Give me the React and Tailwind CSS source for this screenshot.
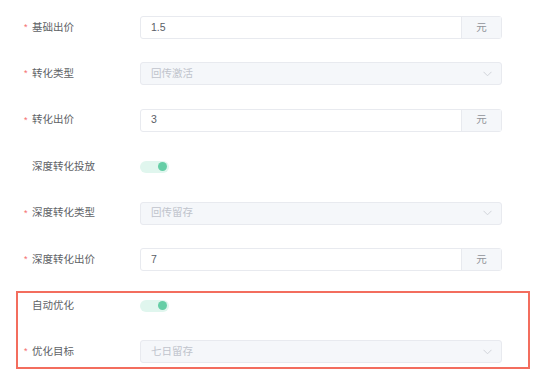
import React from "react";

const font = { fontFamily: '"Liberation Sans", "Noto Sans CJK SC", sans-serif' };

function Label({ text, required, inBox }) {
  return (
    <div className={`flex items-center text-[10.5px] text-[#606266] ${inBox ? "w-[122px] pl-[6px]" : "w-[124px] pl-[8px]"}`}>
      <span className="w-[8px] text-[#f56c6c] text-[9px] leading-none">{required ? "*" : ""}</span>
      <span>{text}</span>
    </div>
  );
}

function PriceInput({ value }) {
  return (
    <div className="flex h-[23px] w-[362px] rounded-[3px] border border-[#e8eaef] bg-white text-[10.5px]">
      <div className="flex flex-1 items-center pl-[10px] text-[#5a5e66]">{value}</div>
      <div className="flex w-[40px] items-center justify-center border-l border-[#e8eaef] bg-[#f5f7fa] text-[#909399]">元</div>
    </div>
  );
}

function DisabledSelect({ value }) {
  return (
    <div className="flex h-[23px] w-[362px] items-center justify-between rounded-[3px] border border-[#e8eaef] bg-[#f5f7fa] pl-[10px] pr-[9px] text-[10.5px] text-[#c0c4cc]">
      <span>{value}</span>
      <svg width="9" height="6" viewBox="0 0 9 6" fill="none">
        <path d="M0.5 0.8 L4.5 4.8 L8.5 0.8" stroke="#d0d3d9" strokeWidth="1" />
      </svg>
    </div>
  );
}

function Toggle() {
  return (
    <div className="flex h-[12px] w-[29px] items-center justify-end rounded-full bg-[#e0f6ee] pr-[2px]">
      <div className="h-[9px] w-[9px] rounded-full bg-[#66cea6]" />
    </div>
  );
}

function Row({ label, required, children, inBox, h = "h-[46.4px]" }) {
  return (
    <div className={`flex items-center ${h}`}>
      <Label text={label} required={required} inBox={inBox} />
      {children}
    </div>
  );
}

export default function App() {
  return (
    <div className="h-[392px] w-[558px] bg-white px-[16px] pt-[4.3px]" style={font}>
      <Row label="基础出价" required>
        <PriceInput value="1.5" />
      </Row>
      <Row label="转化类型" required>
        <DisabledSelect value="回传激活" />
      </Row>
      <Row label="转化出价" required>
        <PriceInput value="3" />
      </Row>
      <Row label="深度转化投放">
        <Toggle />
      </Row>
      <Row label="深度转化类型" required>
        <DisabledSelect value="回传留存" />
      </Row>
      <Row label="深度转化出价" required>
        <PriceInput value="7" />
      </Row>

      <div className="mt-[8.3px] w-[514px] border-2 border-[#f36d5e] pb-[2px]">
        <Row label="自动优化" inBox h="h-[26px]">
          <Toggle />
        </Row>
        <div className="mt-[20px]">
          <Row label="优化目标" required inBox h="h-[26px]">
            <DisabledSelect value="七日留存" />
          </Row>
        </div>
      </div>
    </div>
  );
}
